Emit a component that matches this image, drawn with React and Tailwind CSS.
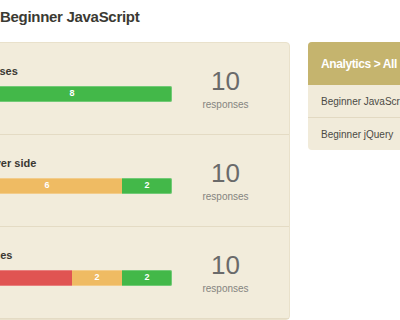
import React from 'react';

const COLORS = { red: 'bg-[#e05452]', orange: 'bg-[#efbb63]', green: 'bg-[#43b849]' };

const rows = [
  { label: 'Total module uses', total: 10, parts: [{ c: 'orange', n: 2 }, { c: 'green', n: 8 }] },
  { label: 'Client and server side', total: 10, parts: [{ c: 'red', n: 2 }, { c: 'orange', n: 6 }, { c: 'green', n: 2 }] },
  { label: 'Debug messages', total: 10, parts: [{ c: 'red', n: 6 }, { c: 'orange', n: 2 }, { c: 'green', n: 2 }] },
];

const Bar = ({ parts }) => (
  <div className="relative flex w-[250px] h-[16px] rounded-[2px] overflow-hidden">
    {parts.map((p, i) => (
      <div
        key={i}
        className={`${COLORS[p.c]} flex items-center justify-center text-white text-[9px] font-bold`}
        style={{ width: p.n * 25 }}
      >
        {p.n}
      </div>
    ))}
    {/* light outline over the bar */}
    <div className="pointer-events-none absolute inset-0 rounded-[2px] border border-white/25" />
  </div>
);

const App = () => {
  return (
    <div className="w-[400px] h-[320px] overflow-hidden bg-white font-['Liberation_Sans',Arial,sans-serif]">
      <h1 className="pt-[8px] text-[15px] leading-[18px] font-bold text-[#3b3a33] tracking-[-0.3px]">
        Beginner JavaScript
      </h1>

      <div className="mt-[16px] -ml-[99px] flex items-start gap-[18px]">
        {/* Left panel */}
        <div className="w-[389px] shrink-0 rounded-[4px] bg-[#f2ecdb] border border-[#e9e1cb]">
          {rows.map((r, i) => (
            <div key={i} className="flex h-[92px] border-b border-[#e4dbc4]">
              <div className="pl-[20px] pt-[22px]">
                <p className="text-[11px] leading-[13px] font-bold text-[#3a3832] whitespace-nowrap">{r.label}</p>
                <div className="mt-[8px]">
                  <Bar parts={r.parts} />
                </div>
              </div>
              <div className="flex-1 pr-[10px] pt-[25px] text-center">
                <p className="text-[26px] leading-[26px] text-[#6a6a6a]">{r.total}</p>
                <p className="mt-[5px] text-[10px] leading-[12px] text-[#858480]">responses</p>
              </div>
            </div>
          ))}
        </div>

        {/* Right panel */}
        <div className="w-[150px] shrink-0 rounded-[4px] overflow-hidden bg-[#f1ebda]">
          <div className="h-[43px] bg-[#c5b46e] flex items-center px-[13px] text-white text-[12px] font-bold tracking-[-0.4px] whitespace-nowrap">
            Analytics &gt; All
          </div>
          <div className="h-[32px] flex items-center px-[13px] text-[10px] text-[#4b4a45] whitespace-nowrap">
            Beginner JavaScript
          </div>
          <div className="h-[33px] border-t border-[#e2d9c2] flex items-center px-[13px] text-[10px] text-[#4b4a45] whitespace-nowrap">
            Beginner jQuery
          </div>
        </div>
      </div>
    </div>
  );
};

export default App;
